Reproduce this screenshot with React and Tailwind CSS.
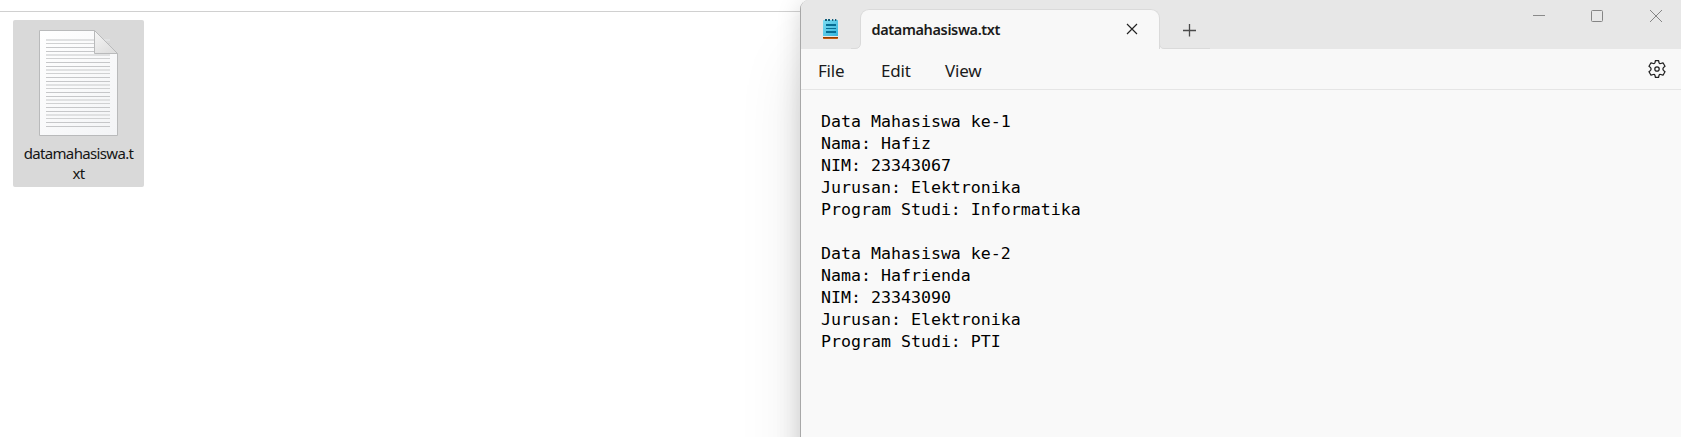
const GROUPS = [10, 25, 40, 55, 70, 85];

function DocumentIcon() {
  return (
    <svg width="80" height="108" viewBox="0 0 80 108" className="mr-px shrink-0">
      <defs>
        <linearGradient id="paper" x1="0" y1="0" x2="1" y2="1">
          <stop offset="0" stopColor="#ffffff" />
          <stop offset="1" stopColor="#f3f4f6" />
        </linearGradient>
        <linearGradient id="fold" x1="0" y1="0" x2="0.7" y2="1">
          <stop offset="0" stopColor="#f6f6f6" />
          <stop offset="1" stopColor="#dedede" />
        </linearGradient>
      </defs>
      <path d="M1.5 1.5H56.5L79.5 24.5V106.5H1.5Z" fill="url(#paper)" stroke="#b9babb" />
      {GROUPS.map((y) => (
        <g key={y}>
          <rect x="8" y={y} width="64" height="2" fill="#e0e1e2" />
          <rect x="8" y={y + 4} width="64" height="1" fill="#d0d1d2" />
          <rect x="8" y={y + 8} width="64" height="1" fill="#c6c7c9" />
          <rect x="8" y={y + 12} width="64" height="1" fill="#c6c7c9" />
        </g>
      ))}
      <path d="M56.5 1.5L79.5 24.5H56.5Z" fill="url(#fold)" stroke="#b9babb" strokeLinejoin="round" />
    </svg>
  );
}

function NotepadIcon() {
  return (
    <svg width="15" height="20" viewBox="0 0 15 20">
      <defs>
        <linearGradient id="pad" x1="0" y1="0" x2="1" y2="1">
          <stop offset="0" stopColor="#7cdcf2" />
          <stop offset="1" stopColor="#35b4dc" />
        </linearGradient>
      </defs>
      <rect y="16" width="15" height="4" rx="0.8" fill="#c75b0c" />
      <rect y="16" width="15" height="2" fill="#f1e7df" />
      <rect y="18" width="15" height="1" fill="#8e3c05" />
      <rect y="1" width="15" height="16" rx="0.6" fill="url(#pad)" />
      <path d="M2 0h2v2H2zM5 0h2v2H5zM9 0h1.3v2H9zM12 0h1.3v2H12z" fill="#135f7c" />
      <path d="M3 5h10v2H3zM3 9h10v1H3zM3 12h10v2H3z" fill="#066d93" />
    </svg>
  );
}

function Gear() {
  return (
    <svg width="20" height="20" viewBox="0 0 20 20" fill="none" stroke="#1f1f1f" strokeWidth="1.25" strokeLinejoin="round">
      <path d="M8.4 1.6H11.6L12 3.6Q12.4 4.9 13.7 4.5L16 3.8L18 7.2L16.4 8.6Q15.3 10 16.4 11.4L18 12.8L16 16.2L13.7 15.5Q12.4 15.1 12 16.4L11.6 18.4H8.4L8 16.4Q7.6 15.1 6.3 15.5L4 16.2L2 12.8L3.6 11.4Q4.7 10 3.6 8.6L2 7.2L4 3.8L6.3 4.5Q7.6 4.9 8 3.6Z" />
      <circle cx="10" cy="10" r="2.2" />
    </svg>
  );
}

const CONTENT = `Data Mahasiswa ke-1
Nama: Hafiz
NIM: 23343067
Jurusan: Elektronika
Program Studi: Informatika

Data Mahasiswa ke-2
Nama: Hafrienda
NIM: 23343090
Jurusan: Elektronika
Program Studi: PTI`;

export default function App() {
  return (
    <div className="flex h-[437px] w-[1681px] overflow-hidden bg-white font-['Noto_Sans',sans-serif]">
      <div className="flex w-[800px] shrink-0 flex-col">
        <div className="h-3 shrink-0 border-b border-[#d0d0d0]" />
        <div className="mt-2 ml-[13px] flex h-[167px] w-[131px] flex-col items-center rounded-[2px] bg-[#d9d9d9] pt-[9px]">
          <DocumentIcon />
          <div className="mt-[6px] w-[116px] text-center text-[15px] leading-5 tracking-[-0.65px] text-[#151515]">
            datamahasiswa.t
            <br />
            xt
          </div>
        </div>
      </div>

      <div className="relative flex h-[700px] flex-1 flex-col rounded-tl-[9px] border-l border-[#a8a8a8] bg-[#f9f9f9] shadow-[0_60px_64px_rgba(0,0,0,0.10),0_4px_24px_rgba(0,0,0,0.16)]">
        <header className="flex h-[49px] shrink-0 rounded-tl-[8px] bg-[#e7e7e7]">
          <div className="flex w-[59px] pt-[19px] pl-[22px]">
            <NotepadIcon />
          </div>
          <div className="relative mt-[9px] flex h-10 w-[300px] items-center rounded-t-[9px] border border-b-0 border-[#dadada] bg-[#f8f8f8] pl-[10.5px]">
            <svg className="absolute bottom-0 -left-[10px]" width="10" height="6" viewBox="0 0 10 6">
              <path d="M10 0V6H5Q9.5 5 9.5 0Z" fill="#f8f8f8" />
              <path d="M0 5.5H4Q9.5 5.5 9.5 0" fill="none" stroke="#dadada" />
            </svg>
            <span className="text-[14.5px] font-semibold tracking-[-0.37px] text-[#1b1b1b]">datamahasiswa.txt</span>
            <svg className="absolute top-[13px] left-[265px]" width="12" height="12" viewBox="0 0 12 12" stroke="#222" strokeWidth="1.15">
              <path d="M1 1L11 11M11 1L1 11" />
            </svg>
          </div>
          <svg className="mt-[43px] -ml-px" width="51" height="6" viewBox="0 0 51 6">
            <path d="M0 0Q.5 5.5 5 5.5V6H0Z" fill="#f8f8f8" />
            <path d="M.5 0Q.5 5.5 5 5.5H51" fill="none" stroke="#dadada" />
          </svg>
          <svg className="mt-6 -ml-[27px]" width="13" height="13" viewBox="0 0 13 13" stroke="#4a4a4a" strokeWidth="1.3">
            <path d="M6.5 0V12.5M0 6.5H13" />
          </svg>
          <div className="ml-auto flex gap-[46px] pt-[10px] pr-[19px]">
            <svg width="12" height="12" viewBox="0 0 12 12" stroke="#8a8a8a">
              <path d="M0 5.5H12" />
            </svg>
            <svg className="mr-px" width="12" height="12" viewBox="0 0 12 12" fill="none" stroke="#858585">
              <rect x=".5" y=".5" width="11" height="11" rx="1" />
            </svg>
            <svg width="12" height="12" viewBox="0 0 12 12" stroke="#858585">
              <path d="M0 0L12 12M12 0L0 12" />
            </svg>
          </div>
        </header>
        <nav className="flex h-[41px] shrink-0 items-center border-b border-[#e5e5e5] bg-[#f8f8f8] pr-[14px] pl-[17px] text-[17px] text-[#1b1b1b]">
          <span className="w-[63px] pt-[3px] tracking-[-0.2px]">File</span>
          <span className="w-16 pt-[3px] tracking-[-0.2px]">Edit</span>
          <span className="pt-[3px] tracking-[-0.2px]">View</span>
          <span className="ml-auto">
            <Gear />
          </span>
        </nav>
        <pre className="pt-[21px] pl-5 font-['DejaVu_Sans_Mono',monospace] text-[16.6px] leading-[22.05px] text-black">{CONTENT}</pre>
      </div>
    </div>
  );
}
